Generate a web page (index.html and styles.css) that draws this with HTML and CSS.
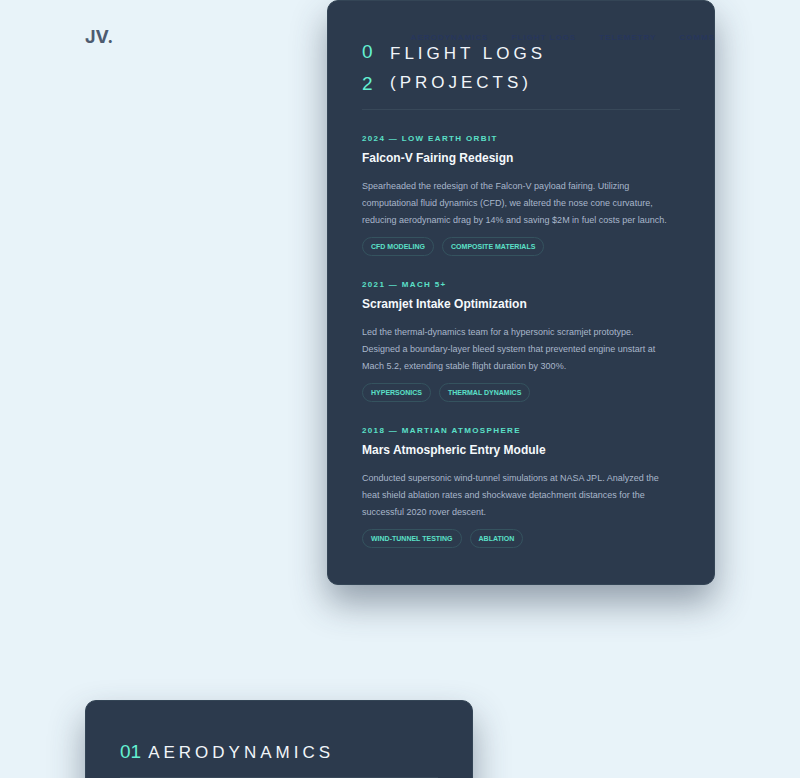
FILE: index.html
```html
<!DOCTYPE html>
<html lang="en">

<head>
    <meta charset="UTF-8">
    <meta name="viewport" content="width=device-width, initial-scale=1.0">
    <title>JV. - Flight Logs</title>
    <link rel="stylesheet" href="styles.css">
</head>

<body>
    <header class="site-header">
        <a href="#" class="logo">JV.</a>
        <nav class="site-nav">
            <a href="#aerodynamics">Aerodynamics</a>
            <a href="#projects">Flight Logs</a>
            <a href="#telemetry">Telemetry</a>
            <a href="#comms">Comms</a>
        </nav>
    </header>

    <main class="sections">
        <section class="card card-right" id="projects">
            <h2 class="card-title">
                <span class="card-number">0<br>2</span>
                <span>Flight Logs (Projects)</span>
            </h2>

            <article class="entry">
                <p class="entry-meta">2024 — Low Earth Orbit</p>
                <h3>Falcon-V Fairing Redesign</h3>
                <p class="entry-text">Spearheaded the redesign of the Falcon-V payload fairing. Utilizing computational fluid dynamics (CFD), we altered the nose cone curvature, reducing aerodynamic drag by 14% and saving $2M in fuel costs per launch.</p>
                <div class="tags">
                    <span class="tag">CFD Modeling</span>
                    <span class="tag">Composite Materials</span>
                </div>
            </article>

            <article class="entry">
                <p class="entry-meta">2021 — Mach 5+</p>
                <h3>Scramjet Intake Optimization</h3>
                <p class="entry-text">Led the thermal-dynamics team for a hypersonic scramjet prototype. Designed a boundary-layer bleed system that prevented engine unstart at Mach 5.2, extending stable flight duration by 300%.</p>
                <div class="tags">
                    <span class="tag">Hypersonics</span>
                    <span class="tag">Thermal Dynamics</span>
                </div>
            </article>

            <article class="entry">
                <p class="entry-meta">2018 — Martian Atmosphere</p>
                <h3>Mars Atmospheric Entry Module</h3>
                <p class="entry-text">Conducted supersonic wind-tunnel simulations at NASA JPL. Analyzed the heat shield ablation rates and shockwave detachment distances for the successful 2020 rover descent.</p>
                <div class="tags">
                    <span class="tag">Wind-Tunnel Testing</span>
                    <span class="tag">Ablation</span>
                </div>
            </article>
        </section>

        <section class="card" id="aerodynamics">
            <h2 class="card-title">
                <span class="card-number">01</span>
                <span>Aerodynamics</span>
            </h2>
        </section>
    </main>
</body>

</html>
```
FILE: styles.css
```css
* {
    margin: 0;
    padding: 0;
    box-sizing: border-box;
}

body {
    background-color: #e8f3f9;
    font-family: "Liberation Sans", Arial, sans-serif;
    min-height: 100vh;
}

/* Header floats over the cards */
.site-header {
    position: absolute;
    top: 0;
    left: 0;
    right: 0;
    z-index: 10;
    display: flex;
    justify-content: space-between;
    align-items: center;
    padding: 25px 85px;
}

.site-header a {
    text-decoration: none;
}

.logo {
    font-family: Inter, sans-serif;
    font-size: 18px;
    font-weight: 700;
    line-height: 24px;
    color: #4d5b70;
}

.site-nav {
    display: flex;
    gap: 23px;
}

.site-nav a {
    font-size: 8px;
    font-weight: 700;
    letter-spacing: 1px;
    text-transform: uppercase;
    color: #27365c;
}

.sections {
    display: flex;
    flex-direction: column;
    gap: 115px;
    padding: 0 85px;
}

.card {
    width: 100%;
    max-width: 388px;
    padding: 35px 34px 36px;
    background-color: #2c3a4d;
    border: 1px solid #344556;
    border-radius: 11px;
    box-shadow: 0 18px 35px rgba(44, 58, 77, 0.45);
}

.card-right {
    align-self: flex-end;
}

.card-title {
    display: flex;
    align-items: center;
    gap: 7px;
    padding-bottom: 9px;
    margin-bottom: 21px;
    border-bottom: 1px solid #384859;
    font-size: 17px;
    font-weight: 400;
    line-height: 29px;
    letter-spacing: 4px;
    text-transform: uppercase;
    color: #f1f5f9;
}

.card-number {
    font-size: 19px;
    line-height: 32px;
    letter-spacing: 0;
    flex: 0 0 21px;
    color: #64f0d2;
}

.entry + .entry {
    margin-top: 21px;
}

.entry-meta {
    font-size: 8px;
    font-weight: 700;
    line-height: 15px;
    letter-spacing: 0.17em;
    text-transform: uppercase;
    color: #5be0c8;
}

.entry h3 {
    font-size: 12px;
    font-weight: 700;
    line-height: 24px;
    margin-bottom: 8px;
    color: #f5f9fc;
}

.entry-text {
    padding-right: 8px;
    font-size: 9px;
    line-height: 17px;
    margin-bottom: 8px;
    color: #a9b7cb;
}

.tags {
    display: flex;
    flex-wrap: wrap;
    gap: 8px;
}

.tag {
    padding: 0 8px;
    border: 1px solid #35535f;
    border-radius: 10px;
    font-size: 7px;
    font-weight: 700;
    line-height: 17px;
    text-transform: uppercase;
    color: #5be0c8;
}
```
